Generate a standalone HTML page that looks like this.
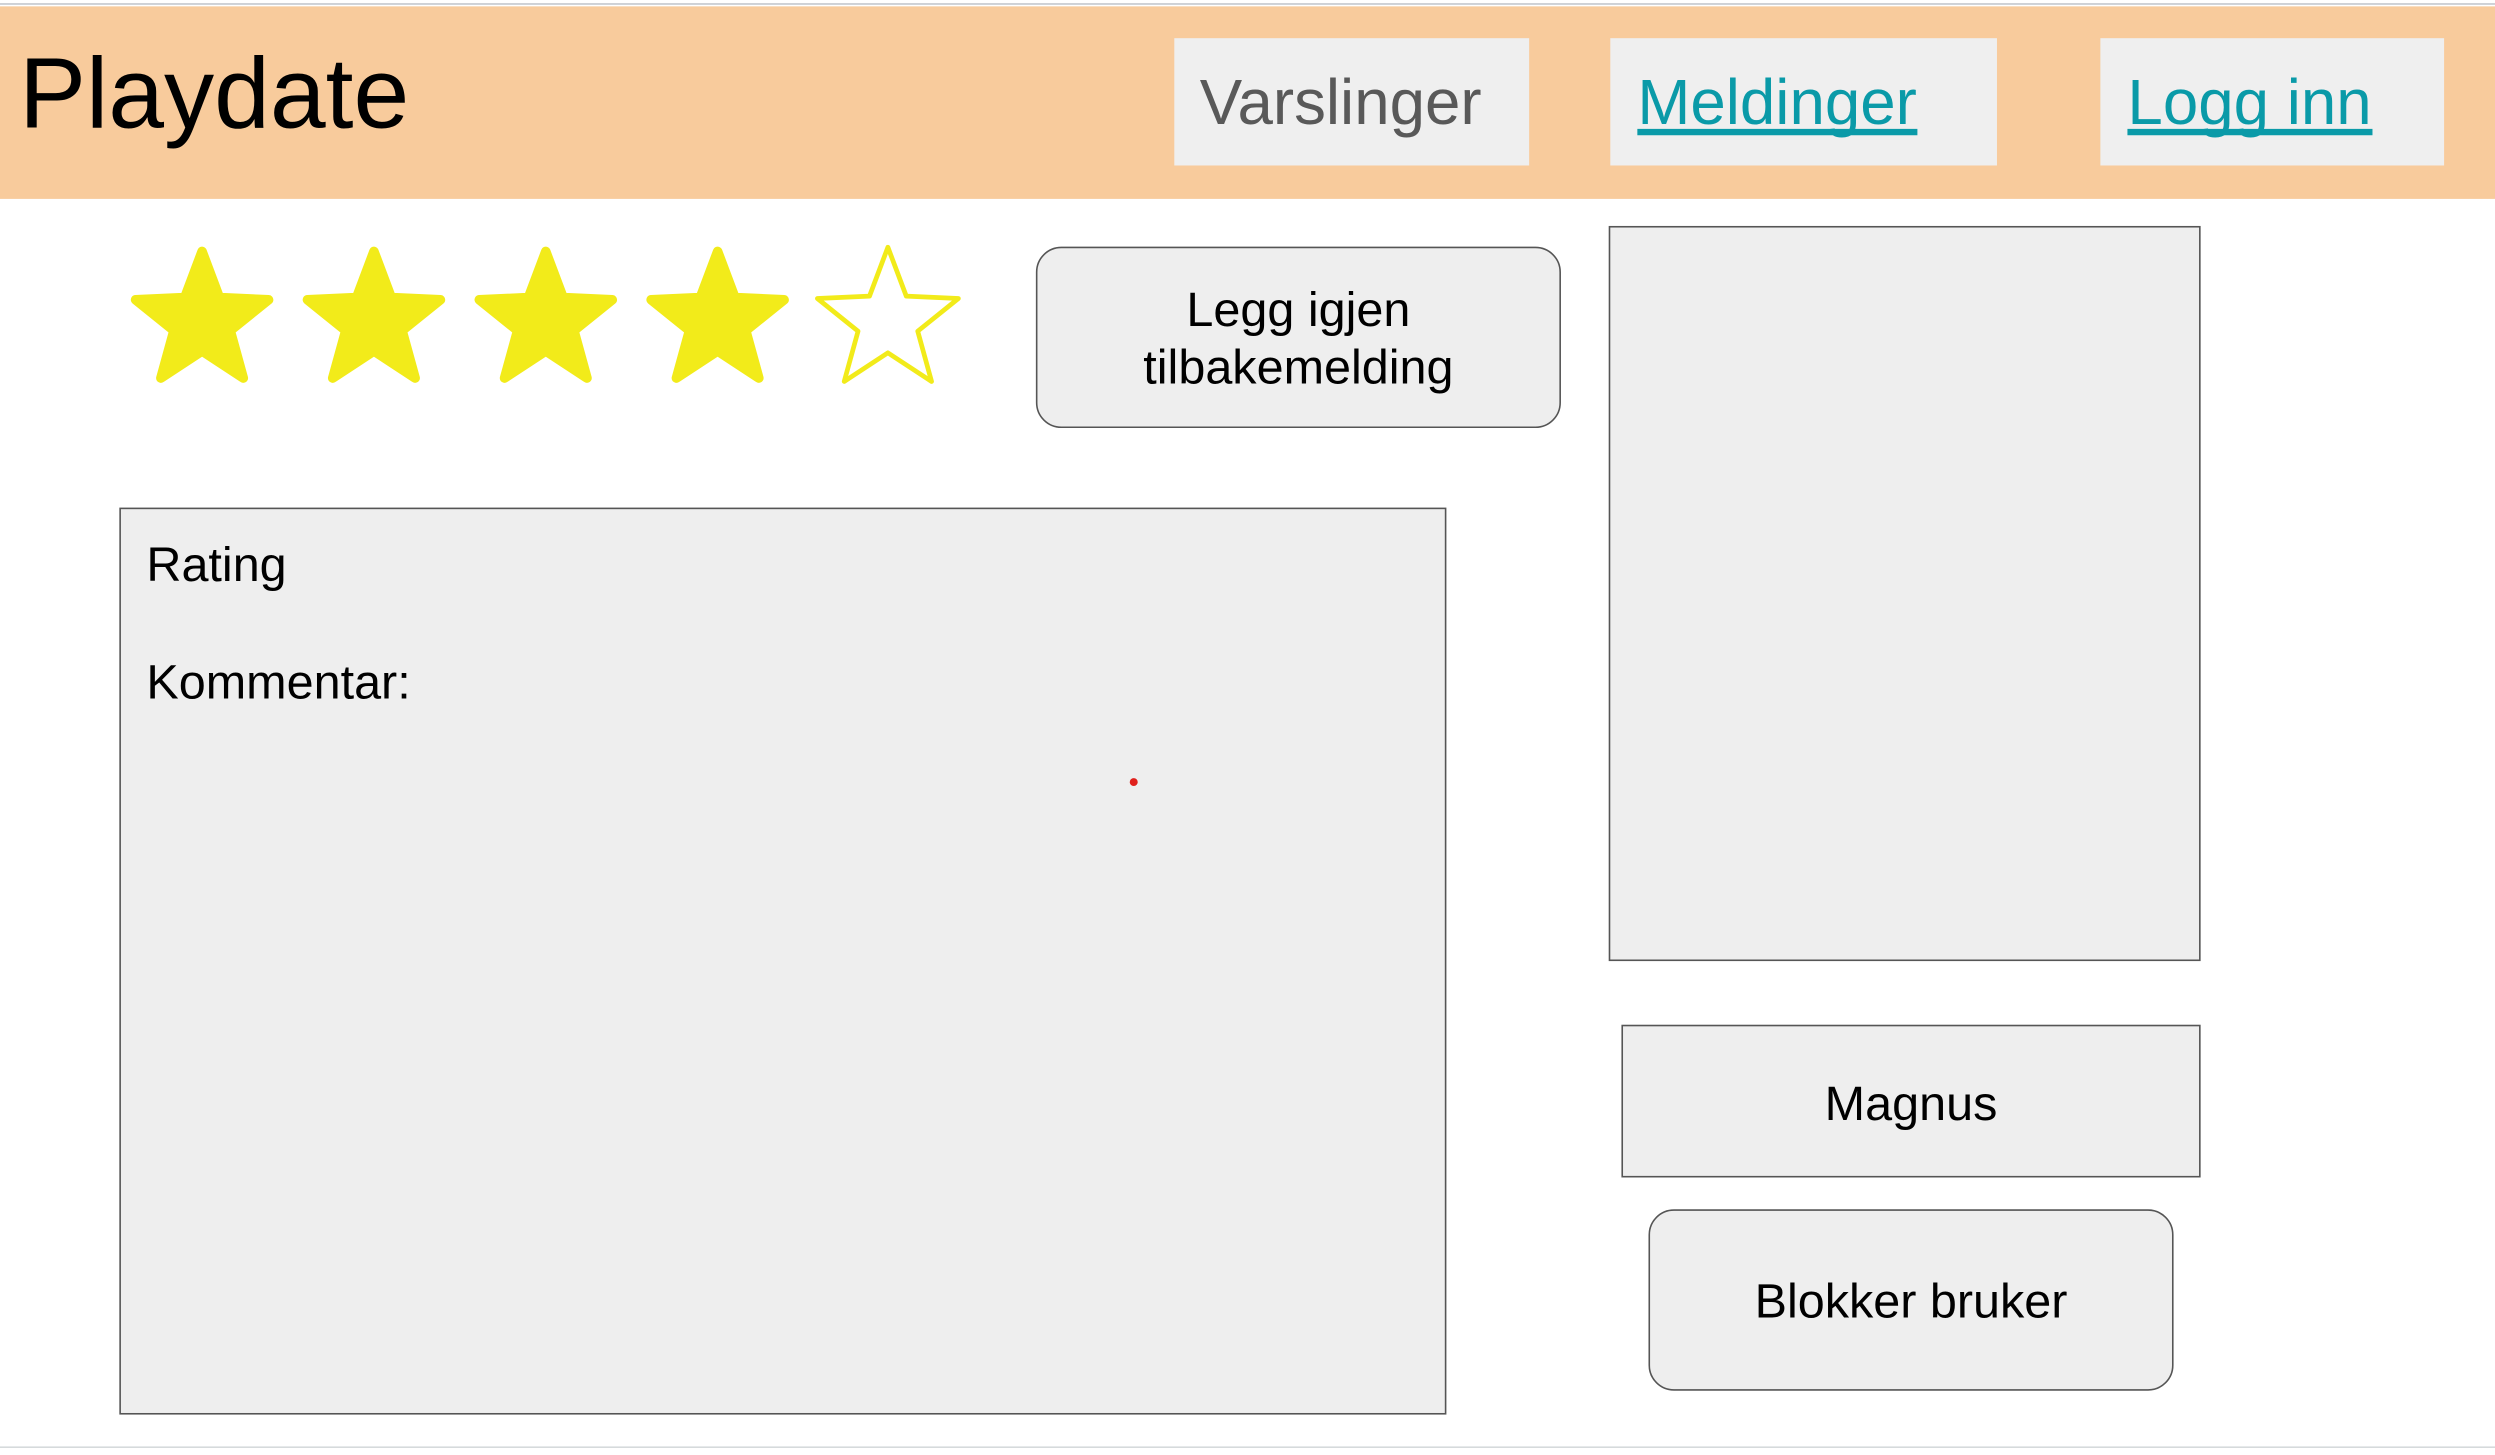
<!DOCTYPE html>
<html><head><meta charset="utf-8"><style>
html,body{margin:0;padding:0;background:#fff;overflow:hidden;}
body{width:2495px;height:1455px;position:relative;}
#w{position:absolute;left:0;top:0;width:1568px;height:915px;transform:scale(1.5912);transform-origin:0 0;font-family:"Liberation Sans",Arial,sans-serif;}
.a{position:absolute;}
.t{position:absolute;line-height:1;white-space:nowrap;}
.box{position:absolute;background:#eeeeee;border:1.4px solid #555;box-sizing:border-box;}
.nav{position:absolute;background:#efefef;top:24px;height:80px;}
.lnk{color:#0a9aa8;}
.ul{position:absolute;height:3.5px;background:#0a9aa8;top:81px;}
</style></head><body><div id="w">
<div class="a" style="left:0;top:1.5px;width:1568px;height:1.6px;background:#c3c7ce"></div>
<div class="a" style="left:0;top:4px;width:1568px;height:121px;background:#f8cb9c"></div>
<div class="t" style="left:12px;top:27.5px;font-size:63px;color:#000">Playdate</div>
<div class="nav" style="left:738px;width:223px"></div>
<div class="nav" style="left:1012px;width:243px"></div>
<div class="nav" style="left:1320px;width:216px"></div>
<div class="t" style="left:754px;top:45px;font-size:40px;color:#595959">Varslinger</div>
<div class="t lnk" style="left:1029px;top:45px;font-size:40px">Meldinger</div>
<div class="ul" style="left:1029px;width:176px"></div>
<div class="t lnk" style="left:1337px;top:45px;font-size:40px">Logg inn</div>
<div class="ul" style="left:1337px;width:154px"></div>

<svg class="a" style="left:0;top:0" width="1568" height="300">
<defs><polygon id="st" points="0,-44 10.9,-15 41.8,-13.6 17.7,5.8 25.9,35.6 0,18.6 -25.9,35.6 -17.7,5.8 -41.8,-13.6 -10.9,-15"/></defs>
<g fill="#f2eb1a" stroke="#f2eb1a" stroke-width="6" stroke-linejoin="round">
<use href="#st" x="127" y="202"/><use href="#st" x="235" y="202"/><use href="#st" x="343" y="202"/><use href="#st" x="451" y="202"/>
</g>
<g transform="translate(558 202) scale(1.06)"><use href="#st" fill="#fff" stroke="#f2eb1a" stroke-width="2.8" stroke-linejoin="round"/></g>
</svg>

<div class="box" style="left:651px;top:155px;width:330px;height:114px;border-radius:16px"></div>
<div class="t" style="left:651px;width:330px;text-align:center;top:178.3px;font-size:30.5px;line-height:35.5px;">Legg igjen<br>tilbakemelding</div>

<div class="box" style="left:1011px;top:142px;width:372px;height:462px"></div>
<div class="box" style="left:75px;top:319px;width:834px;height:570px"></div>
<div class="t" style="left:92px;top:340px;font-size:30.5px">Rating</div>
<div class="t" style="left:92px;top:413.5px;font-size:30.5px">Kommentar:</div>
<div class="a" style="left:709.5px;top:489px;width:5px;height:5px;border-radius:50%;background:#e0201c"></div>

<div class="box" style="left:1019px;top:644px;width:364px;height:96px"></div>
<div class="t" style="left:1019px;width:364px;text-align:center;top:678.5px;font-size:30.5px">Magnus</div>
<div class="box" style="left:1036px;top:760px;width:330px;height:114px;border-radius:16px"></div>
<div class="t" style="left:1036px;width:330px;text-align:center;top:803px;font-size:30.5px">Blokker bruker</div>

<div class="a" style="left:0;top:908.5px;width:1568px;height:1.5px;background:#d6dadc"></div>
</div></body></html>
